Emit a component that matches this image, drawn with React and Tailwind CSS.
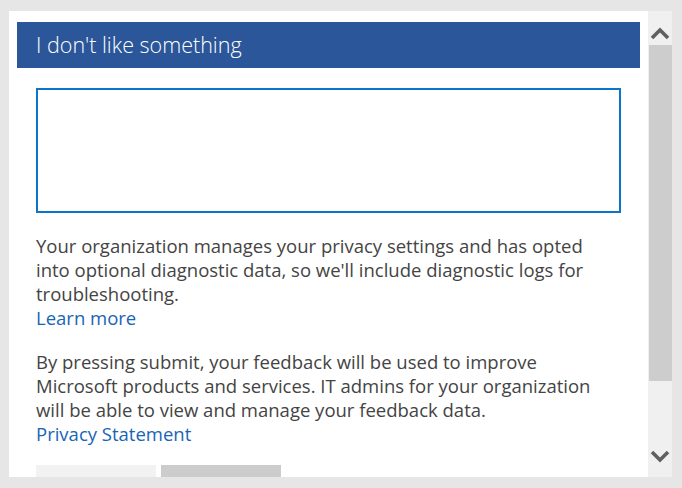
export default function App() {
  return (
    <div className="flex h-[488px] w-[682px] bg-[#e6e6e6] pl-[9px] pt-[11px] font-['Open_Sans',sans-serif]">
      {/* Panel */}
      <div className="h-[466px] w-[639px] overflow-hidden bg-white pl-[8px] pt-[11px]">
        <div className="w-[623px]">
          <div className="flex h-[46px] items-center bg-[#2b579a] pl-[19px] text-[21.5px] font-light text-white">
            I don't like something
          </div>
          <div className="px-[19px] pt-[20px]">
            <textarea className="block h-[125px] w-[585px] resize-none border-2 border-[#0c75ca] outline-none" />
            <div className="mt-[21px] w-[562px] text-[18.5px] leading-[24px] text-[#444]">
              <p>
                Your organization manages your privacy settings and has opted into optional diagnostic data, so we'll include diagnostic logs for troubleshooting.
              </p>
              <a className="text-[#1865b5]">Learn more</a>
            </div>
            <div className="mt-[20px] w-[562px] text-[18.5px] leading-[24px] text-[#444]">
              <p>
                By pressing submit, your feedback will be used to improve Microsoft products and services. IT admins for your organization will be able to view and manage your feedback data.
              </p>
              <a className="text-[#1865b5]">Privacy Statement</a>
            </div>
            <div className="mt-[19px] flex gap-[5px]">
              <button className="h-[32px] w-[120px] bg-[#f2f2f2]"></button>
              <button className="h-[32px] w-[120px] bg-[#cccccc]"></button>
            </div>
          </div>
        </div>
      </div>
      {/* Scrollbar */}
      <div className="flex h-[466px] w-[24px] flex-col bg-[#f0f0f0]">
        <div className="flex h-[34px] items-center justify-center pt-[10px]">
          <svg width="20" height="14" viewBox="0 0 20 14">
            <path d="M2 12 L10 4 L18 12" fill="none" stroke="#606060" strokeWidth="3.6" />
          </svg>
        </div>
        <div className="mx-auto h-[336px] w-[23px] bg-[#cdcdcd]" />
        <div className="flex-1" />
        <div className="flex h-[34px] items-center justify-center pb-[6px]">
          <svg width="20" height="14" viewBox="0 0 20 14">
            <path d="M2 2 L10 10 L18 2" fill="none" stroke="#606060" strokeWidth="3.6" />
          </svg>
        </div>
      </div>
    </div>
  );
}
